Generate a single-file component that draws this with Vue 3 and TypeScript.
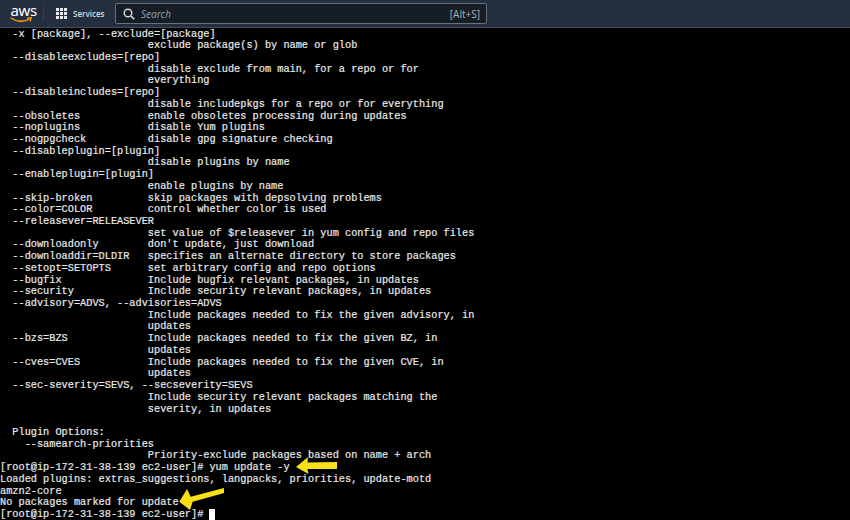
<script setup lang="ts">
const lines: string[] = [
  '  -x [package], --exclude=[package]',
  '                        exclude package(s) by name or glob',
  '  --disableexcludes=[repo]',
  '                        disable exclude from main, for a repo or for',
  '                        everything',
  '  --disableincludes=[repo]',
  '                        disable includepkgs for a repo or for everything',
  '  --obsoletes           enable obsoletes processing during updates',
  '  --noplugins           disable Yum plugins',
  '  --nogpgcheck          disable gpg signature checking',
  '  --disableplugin=[plugin]',
  '                        disable plugins by name',
  '  --enableplugin=[plugin]',
  '                        enable plugins by name',
  '  --skip-broken         skip packages with depsolving problems',
  '  --color=COLOR         control whether color is used',
  '  --releasever=RELEASEVER',
  '                        set value of $releasever in yum config and repo files',
  "  --downloadonly        don't update, just download",
  '  --downloaddir=DLDIR   specifies an alternate directory to store packages',
  '  --setopt=SETOPTS      set arbitrary config and repo options',
  '  --bugfix              Include bugfix relevant packages, in updates',
  '  --security            Include security relevant packages, in updates',
  '  --advisory=ADVS, --advisories=ADVS',
  '                        Include packages needed to fix the given advisory, in',
  '                        updates',
  '  --bzs=BZS             Include packages needed to fix the given BZ, in',
  '                        updates',
  '  --cves=CVES           Include packages needed to fix the given CVE, in',
  '                        updates',
  '  --sec-severity=SEVS, --secseverity=SEVS',
  '                        Include security relevant packages matching the',
  '                        severity, in updates',
  ' ',
  '  Plugin Options:',
  '    --samearch-priorities',
  '                        Priority-exclude packages based on name + arch',
  '[root@ip-172-31-38-139 ec2-user]# yum update -y',
  'Loaded plugins: extras_suggestions, langpacks, priorities, update-motd',
  'amzn2-core',
  'No packages marked for update',
]
const dots = [0, 1, 2, 3, 4, 5, 6, 7, 8]
</script>

<template>
  <div class="page">
    <header class="nav">
      <div class="logo">
        <span class="logo-text">aws</span>
        <svg class="smile" width="22" height="6" viewBox="0 0 22 6">
          <path d="M0.5 0.8 C6 4.8 14 5.4 19.5 2.2" fill="none" stroke="#f90" stroke-width="1.4" />
          <path d="M17.2 1.2 L21.2 0.8 L20.2 4.4" fill="none" stroke="#f90" stroke-width="1.2" />
        </svg>
      </div>
      <div class="divider"></div>
      <div class="services">
        <div class="grid">
          <i v-for="d in dots" :key="d"></i>
        </div>
        <span>Services</span>
      </div>
      <div class="search">
        <svg width="12" height="12" viewBox="0 0 12 12">
          <circle cx="5" cy="5" r="3.8" fill="none" stroke="#d5dbdb" stroke-width="1.4" />
          <path d="M8 8 L11.2 11.2" stroke="#d5dbdb" stroke-width="1.6" />
        </svg>
        <span class="placeholder">Search</span>
        <span class="shortcut">[Alt+S]</span>
      </div>
    </header>
    <main class="terminal">
      <pre class="output"><template v-for="(line, i) in lines" :key="i">{{ line }}
</template>[root@ip-172-31-38-139 ec2-user]# <span class="cursor"></span></pre>
      <svg class="arrow arrow-one" width="44" height="20" viewBox="0 0 44 20">
        <path d="M1 11 L13 1 L12.5 6.5 L42 6 L42 13 L12.5 13 L13.5 18 Z" fill="#f7e017" />
      </svg>
      <svg class="arrow arrow-two" width="48" height="24" viewBox="0 0 48 24">
        <path d="M1.3 14.7 L9 2 L12.7 9.7 L46 1 L46 6 L14.7 14.7 L12 23 Z" fill="#f7e017" />
      </svg>
    </main>
  </div>
</template>

<style scoped>
.page {
  width: 850px;
  height: 520px;
  overflow: hidden;
  background: #000;
  display: flex;
  flex-direction: column;
}
.nav {
  height: 27px;
  flex: none;
  background: #232f3e;
  border-bottom: 1px solid #414d5c;
  display: flex;
  align-items: center;
  padding-left: 10px;
  font-family: "Open Sans", "Noto Sans", sans-serif;
  color: #d5dbdb;
}
.logo {
  width: 23px;
  height: 21px;
  display: flex;
  flex-direction: column;
  align-items: flex-start;
  color: #fff;
}
.logo-text {
  font-size: 15px;
  line-height: 14px;
  letter-spacing: -0.4px;
  padding-left: 0.5px;
  font-family: "Noto Sans", sans-serif;
}
.divider {
  width: 1px;
  height: 15px;
  background: #37424f;
  margin-left: 10px;
}
.services {
  display: flex;
  align-items: center;
  gap: 6px;
  margin-left: 12px;
  font-size: 8px;
  font-weight: 600;
  width: 48px;
  flex: none;
}
.grid {
  display: grid;
  grid-template-columns: repeat(3, 3px);
  grid-auto-rows: 3px;
  gap: 1px;
}
.grid i {
  background: #e9ebed;
}
.search {
  margin-left: 11px;
  width: 372px;
  height: 21px;
  box-sizing: border-box;
  border: 1px solid #687078;
  border-radius: 2px;
  background: #161d26;
  display: flex;
  align-items: center;
  padding: 0 6px 0 7px;
  font-size: 10px;
}
.placeholder {
  font-style: italic;
  color: #95a5a6;
  margin-left: 6px;
}
.shortcut {
  margin-left: auto;
  color: #aab7b8;
}
.terminal {
  position: relative;
  flex: 1;
  min-height: 0;
  padding-top: 0.5px;
}
.output {
  margin: 0;
  padding: 0;
  font-family: "Liberation Mono", monospace;
  font-size: 10.28px;
  line-height: 11.72px;
  color: #e8e8e8;
  -webkit-text-stroke: 0.2px #e8e8e8;
  white-space: pre;
}
.cursor {
  display: inline-block;
  width: 6px;
  height: 11.5px;
  background: #fff;
  vertical-align: top;
}
.arrow {
  position: absolute;
}
.arrow-one {
  left: 295px;
  top: 428px;
}
.arrow-two {
  left: 178px;
  top: 459px;
}
</style>
